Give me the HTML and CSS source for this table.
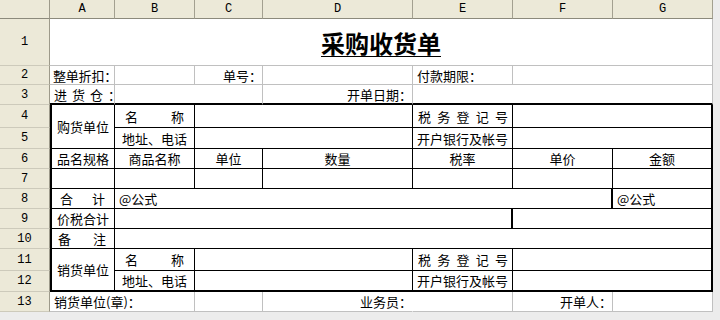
FILE: index.html
```html
<!DOCTYPE html>
<html lang="zh-CN">
<head>
<meta charset="utf-8">
<title>采购收货单</title>
<link rel="stylesheet" href="styles.css">
</head>
<body>
<div class="sheet">
  <div class="corner"></div>
  <div class="ch">A</div>
  <div class="ch">B</div>
  <div class="ch">C</div>
  <div class="ch">D</div>
  <div class="ch">E</div>
  <div class="ch">F</div>
  <div class="ch">G</div>

  <div class="rh">1</div>
  <div class="cell c s7 title"><span>采购收货单</span></div>

  <div class="rh">2</div>
  <div class="cell l tight">整单折扣：</div>
  <div class="cell"></div>
  <div class="cell r">单号：</div>
  <div class="cell"></div>
  <div class="cell l">付款期限：</div>
  <div class="cell s2"></div>

  <div class="rh">3</div>
  <div class="cell l tb spread"><span>进</span><span>货</span><span>仓</span><span>：</span></div>
  <div class="cell s2 tb"></div>
  <div class="cell r tb">开单日期：</div>
  <div class="cell s3 tb"></div>

  <div class="rh">4</div>
  <div class="cell t c tl r2">购货单位</div>
  <div class="cell t d pn"><span>名</span><span>称</span></div>
  <div class="cell t s2"></div>
  <div class="cell t d pt"><span>税</span><span>务</span><span>登</span><span>记</span><span>号</span></div>
  <div class="cell t s2 tr"></div>

  <div class="rh">5</div>
  <div class="cell t c">地址、电话</div>
  <div class="cell t s2"></div>
  <div class="cell t c">开户银行及帐号</div>
  <div class="cell t s2 tr"></div>

  <div class="rh">6</div>
  <div class="cell t c tl">品名规格</div>
  <div class="cell t c">商品名称</div>
  <div class="cell t c">单位</div>
  <div class="cell t c">数量</div>
  <div class="cell t c">税率</div>
  <div class="cell t c">单价</div>
  <div class="cell t c tr">金额</div>

  <div class="rh">7</div>
  <div class="cell t tl"></div>
  <div class="cell t"></div>
  <div class="cell t"></div>
  <div class="cell t"></div>
  <div class="cell t"></div>
  <div class="cell t"></div>
  <div class="cell t tr"></div>

  <div class="rh">8</div>
  <div class="cell t d tl ph"><span>合</span><span>计</span></div>
  <div class="cell t l s5 tr">@公式</div>
  <div class="cell t l tr">@公式</div>

  <div class="rh">9</div>
  <div class="cell t c tl">价税合计</div>
  <div class="cell t s4 tr"></div>
  <div class="cell t s2 tr"></div>

  <div class="rh">10</div>
  <div class="cell t d tl pb"><span>备</span><span>注</span></div>
  <div class="cell t s6 tr"></div>

  <div class="rh">11</div>
  <div class="cell t c tl r2 tb">销货单位</div>
  <div class="cell t d pn"><span>名</span><span>称</span></div>
  <div class="cell t s2"></div>
  <div class="cell t d pt"><span>税</span><span>务</span><span>登</span><span>记</span><span>号</span></div>
  <div class="cell t s2 tr"></div>

  <div class="rh">12</div>
  <div class="cell t c tb">地址、电话</div>
  <div class="cell t s2 tb"></div>
  <div class="cell t c tb">开户银行及帐号</div>
  <div class="cell t s2 tr tb"></div>

  <div class="rh">13</div>
  <div class="cell l s2">销货单位(章)：</div>
  <div class="cell"></div>
  <div class="cell r nr">业务员：</div>
  <div class="cell"></div>
  <div class="cell r">开单人：</div>
  <div class="cell"></div>
</div>
</body>
</html>
```

FILE: styles.css
```css
* {
  box-sizing: border-box;
}

html,
body {
  margin: 0;
  padding: 0;
}

body {
  width: 720px;
  height: 320px;
  overflow: hidden;
  background: #ececec;
  font-family: "Noto Sans CJK SC", "Noto Sans", sans-serif;
  font-size: 13px;
  color: #000;
}

.sheet {
  display: grid;
  width: 713px;
  grid-template-columns: 50px 65px 80px 68px 150px 100px 100px 100px;
  grid-template-rows: 19px 47px 19px 20px 23px 21px 20px 20px 20px 20px 20px 22px 21px 20px;
  background: #fff;
}

.corner,
.ch,
.rh {
  background: #ece9d8;
  display: flex;
  align-items: center;
  justify-content: center;
  font-family: "Liberation Mono", "DejaVu Sans Mono", monospace;
  font-size: 12px;
  line-height: 1;
}

.corner {
  border-right: 1px solid #9d9a8a;
  border-bottom: 1px solid #8c8a7c;
}

.ch {
  border-right: 1px solid #a3a090;
  border-bottom: 1px solid #8c8a7c;
}

.rh {
  border-right: 1px solid #9d9a8a;
  border-bottom: 1px solid #cdcabb;
}

.cell {
  display: flex;
  align-items: center;
  padding: 0 3px;
  white-space: nowrap;
  line-height: 1;
  border-right: 1px solid #c0c0c0;
  border-bottom: 1px solid #c0c0c0;
}

.l {
  justify-content: flex-start;
  padding-left: 4px;
}

.tight {
  padding-left: 3px;
  letter-spacing: -0.2px;
}

.spread {
  gap: 5px;
}

.r {
  justify-content: flex-end;
  padding-right: 0;
}

.c {
  justify-content: center;
  padding: 0;
}

.d {
  justify-content: space-between;
}

.pn {
  padding: 0 10px;
}

.pt {
  padding: 0 4px 0 5px;
}

.ph {
  padding: 0 9px 0 8px;
}

.pb {
  padding: 0 8px 0 6px;
}

.s2 { grid-column: span 2; }
.s3 { grid-column: span 3; }
.s4 { grid-column: span 4; }
.s5 { grid-column: span 5; }
.s6 { grid-column: span 6; }
.s7 { grid-column: span 7; }
.r2 { grid-row: span 2; }

.t {
  border-right-color: #000;
  border-bottom-color: #000;
}

.tl {
  border-left: 2px solid #000;
}

.tr {
  border-right: 2px solid #000;
}

.tb {
  border-bottom: 2px solid #000;
}

.nr {
  border-right-color: transparent;
}

.title {
  font-size: 24px;
  font-weight: bold;
  padding-top: 2px;
}

.title span {
  text-decoration: underline;
  text-decoration-thickness: 1px;
  text-underline-offset: 3px;
}
```
